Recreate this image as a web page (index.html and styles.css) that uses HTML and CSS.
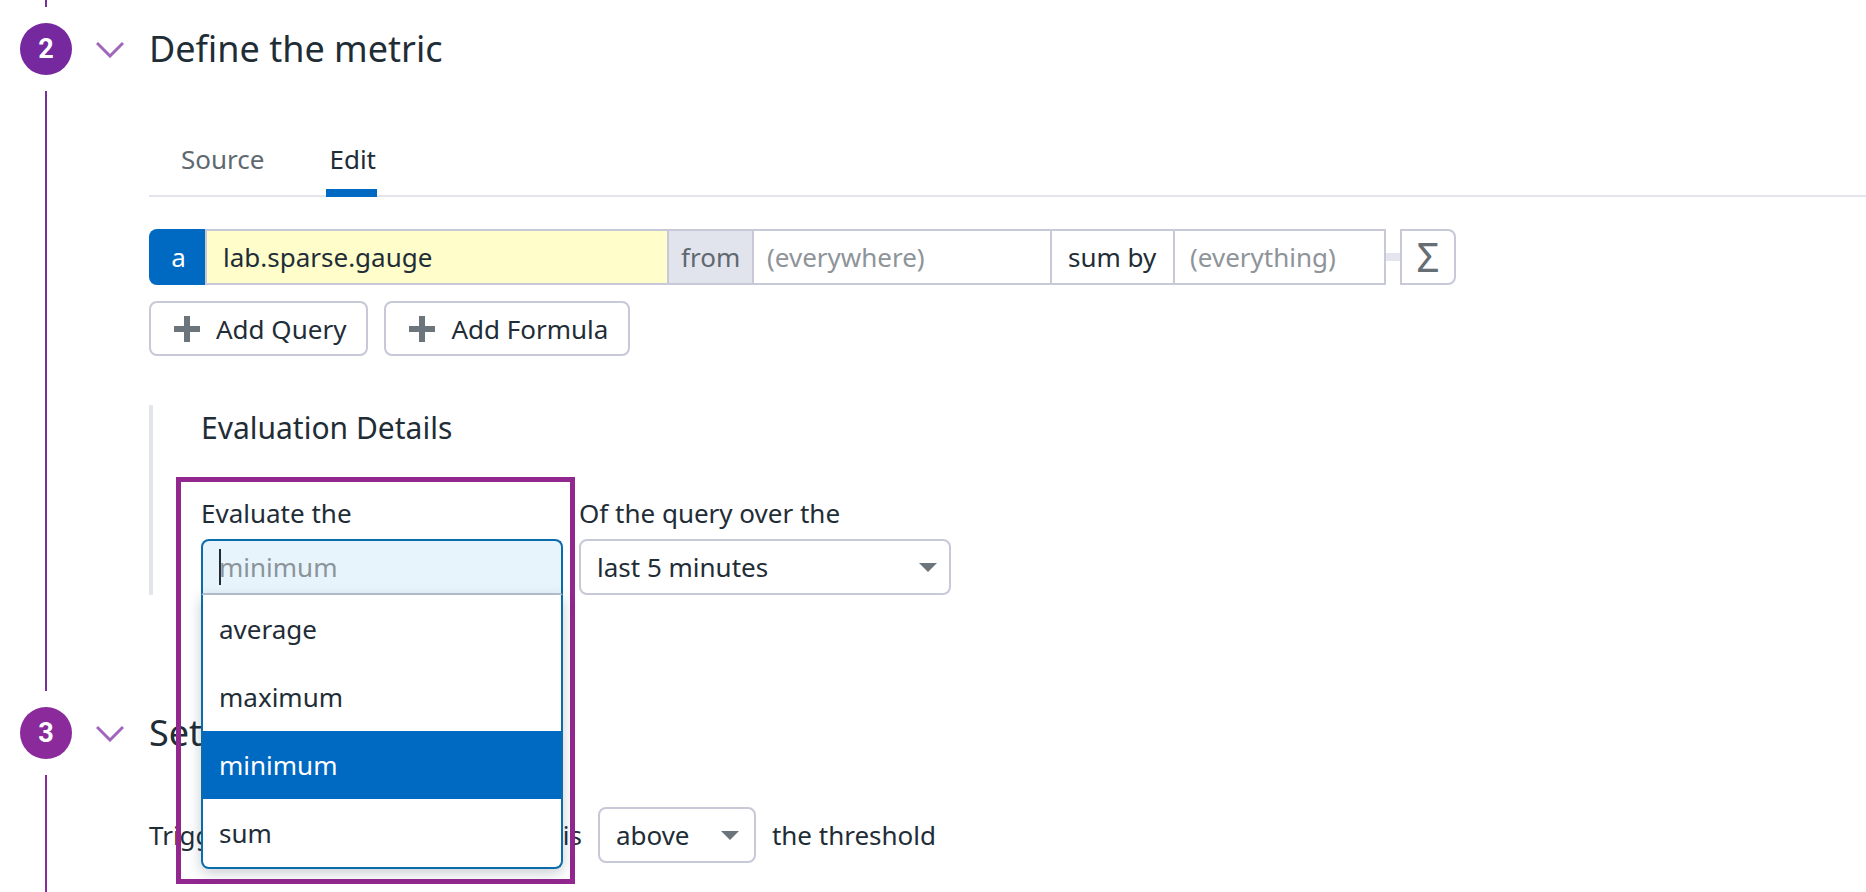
FILE: index.html
```html
<!DOCTYPE html>
<html lang="en">
<head>
<meta charset="utf-8">
<title>Define the metric</title>
<link rel="stylesheet" href="styles.css">
</head>
<body>
<main class="steps">
  <section class="step step-metric">
    <div class="rail">
      <span class="rail-stub"></span>
      <span class="badge badge-two">2</span>
      <span class="rail-line"></span>
    </div>
    <div class="step-main">
      <header class="step-head">
        <svg class="chevron" viewBox="0 0 28 17"><path d="M1 2 L14 15 L27 2" fill="none" stroke="currentColor" stroke-width="3"/></svg>
        <h2 class="step-title">Define the metric</h2>
      </header>
      <div class="step-body">
        <nav class="tabs">
          <span class="tab">Source</span>
          <span class="tab tab-active">Edit</span>
        </nav>
        <div class="query-row">
          <span class="q-letter">a</span>
          <span class="q-cell q-metric">lab.sparse.gauge</span>
          <span class="q-cell q-from">from</span>
          <span class="q-cell q-where">(everywhere)</span>
          <span class="q-cell q-sum">sum by</span>
          <span class="q-cell q-group">(everything)</span>
          <span class="q-link"></span>
          <span class="q-sigma">Σ</span>
        </div>
        <div class="actions">
          <button class="add-btn"><svg class="plus" viewBox="0 0 28 28"><path d="M14 1V27M1 14H27" fill="none" stroke="currentColor" stroke-width="6"/></svg>Add Query</button>
          <button class="add-btn"><svg class="plus" viewBox="0 0 28 28"><path d="M14 1V27M1 14H27" fill="none" stroke="currentColor" stroke-width="6"/></svg>Add Formula</button>
        </div>
        <div class="evaluation">
          <h3 class="eval-title">Evaluation Details</h3>
          <div class="eval-fields">
            <div class="field field-agg">
              <label class="field-label">Evaluate the</label>
              <div class="combo">
                <div class="combo-input"><span class="cursor"></span><span class="combo-ph">minimum</span></div>
                <ul class="combo-list">
                  <li class="combo-opt">average</li>
                  <li class="combo-opt">maximum</li>
                  <li class="combo-opt combo-opt-active">minimum</li>
                  <li class="combo-opt">sum</li>
                </ul>
              </div>
            </div>
            <div class="field field-window">
              <label class="field-label">Of the query over the</label>
              <div class="select select-window">last 5 minutes<svg class="caret" viewBox="0 0 18 9"><path d="M0 0H18L9 9Z" fill="currentColor"/></svg></div>
            </div>
          </div>
          <div class="callout"></div>
        </div>
      </div>
    </div>
  </section>
  <section class="step step-alert">
    <div class="rail">
      <span class="badge badge-three">3</span>
      <span class="rail-line"></span>
    </div>
    <div class="step-main">
      <header class="step-head">
        <svg class="chevron" viewBox="0 0 28 17"><path d="M1 2 L14 15 L27 2" fill="none" stroke="currentColor" stroke-width="3"/></svg>
        <h2 class="step-title">Set alert conditions</h2>
      </header>
      <div class="step-body">
        <div class="trigger-row">
          <span class="trigger-text">Trigger when the evaluated value is</span>
          <div class="select select-dir">above<svg class="caret" viewBox="0 0 18 9"><path d="M0 0H18L9 9Z" fill="currentColor"/></svg></div>
          <span>the threshold</span>
        </div>
      </div>
    </div>
  </section>
</main>
</body>
</html>
```
FILE: styles.css
```css
* { box-sizing: border-box; }
html, body { margin: 0; height: 892px; overflow: hidden; background: #fff; }
body { font-family: "Noto Sans", "Open Sans", sans-serif; font-size: 26px; line-height: 32px; color: #1f2d37; }
.steps { display: flex; flex-direction: column; }
.step { display: grid; grid-template-columns: 72px 1fr; }
.step-metric { height: 691px; }
.step-alert { height: 201px; padding-top: 16px; }
.step-metric .step-main { padding-top: 23px; }

.rail { display: flex; flex-direction: column; align-items: center; padding-left: 20px; min-height: 0; }
.rail-stub { width: 2px; height: 7px; background: #74309b; margin-bottom: 16px; }
.rail-line { flex: 1; width: 2px; margin-top: 16px; background: #74309b; }
.step-alert .rail-line { background: #8a2a9b; }
.badge { flex: none; width: 52px; height: 52px; border-radius: 50%; display: flex; align-items: center; justify-content: center; color: #fff; font-family: Roboto, sans-serif; font-weight: 700; font-size: 27px; }
.badge-two { background: #76289f; }
.badge-three { background: #8a2a9b; }

.step-head { display: flex; align-items: center; height: 52px; }
.chevron { width: 28px; height: 17px; margin-left: 24px; color: #a065bd; flex: none; }
.step-title { margin: 0 0 0 25px; font-size: 36px; line-height: 44px; font-weight: 400; white-space: nowrap; }
.step-body { margin-left: 77px; }

.tabs { display: flex; gap: 58px; margin-top: 68px; padding-left: 28px; border-bottom: 2px solid #e3e5eb; height: 54px; }
.tab { padding: 0 4px; color: #60696f; border-bottom: 8px solid transparent; height: 54px; margin-bottom: -2px; }
.tab-active { width: 51px; padding: 0 0 0 3px; color: #1f2d37; border-bottom-color: #0069c1; }

.query-row { display: flex; height: 56px; margin-top: 32px; }
.q-letter { width: 56px; background: #0069c1; color: #fff; border-radius: 8px 0 0 8px; display: flex; align-items: center; justify-content: center; padding-left: 3px; }
.q-cell { display: flex; align-items: center; border: 2px solid #c7c8d8; border-left-width: 0; padding-left: 16px; }
.q-metric { width: 464px; background: #fffecb; border-left-width: 2px; }
.q-from { width: 85px; background: #e2e4ed; color: #5f686e; padding-left: 12px; }
.q-where { width: 298px; color: #8e9499; padding-left: 13px; }
.q-sum { width: 123px; padding-left: 16px; }
.q-group { width: 211px; color: #8e9499; padding-left: 15px; }
.q-link { width: 14px; height: 8px; align-self: center; background: #e4e5ee; }
.q-sigma { width: 56px; border: 2px solid #c7c8d8; border-radius: 0 8px 8px 0; display: flex; align-items: center; justify-content: center; font-size: 40px; font-weight: 400; color: #666e74; }

.actions { display: flex; gap: 16px; margin-top: 16px; }
.add-btn { display: flex; align-items: center; gap: 15px; height: 55px; padding: 0 20px 0 22px; background: #fff; border: 2px solid #c7c8d8; border-radius: 8px; font: inherit; color: inherit; }
.plus { width: 28px; height: 28px; color: #6c757b; flex: none; }

.evaluation { position: relative; margin-top: 49px; height: 190px; border-left: 4px solid #e4e5ec; padding-left: 48px; }
.eval-title { margin: 0; font-size: 30px; line-height: 46px; font-weight: 400; }
.eval-fields { display: flex; gap: 16px; margin-top: 46px; }
.field { display: flex; flex-direction: column; }
.field-label { line-height: 32px; height: 42px; }
.field-agg { width: 362px; }
.field-window { width: 372px; }

.combo { position: relative; z-index: 3; height: 56px; border-radius: 8px 8px 0 0; }
.combo-input { height: 56px; display: flex; align-items: center; padding-left: 16px; background: #e8f4fc; border: 2px solid #0a6cab; border-bottom: 2px solid #b8c3d0; border-radius: 8px 8px 0 0; }
.cursor { width: 2px; height: 36px; margin-right: -2px; background: #1f2d37; }
.combo-ph { color: #8b9499; }
.combo-list { position: absolute; left: 0; right: 0; top: 100%; margin: 0; padding: 0; list-style: none; background: #fff; border: 2px solid #0a6cab; border-top: 0; border-radius: 0 0 8px 8px; box-shadow: 0 4px 14px rgba(40, 50, 70, .25); }
.combo-opt { height: 68px; display: flex; align-items: center; padding-left: 16px; }
.combo-opt-active { background: #0069c1; color: #fff; }

.select { display: flex; align-items: center; justify-content: space-between; height: 56px; border: 2px solid #c7c8d8; border-radius: 8px; padding: 0 12px 0 16px; background: #fff; white-space: nowrap; }
.caret { width: 18px; height: 9px; color: #6c757b; flex: none; }
.select-dir { width: 158px; padding-right: 15px; }

.callout { position: absolute; z-index: 2; left: 23px; top: 72px; width: 399px; height: 407px; border: 5px solid #92278f; pointer-events: none; }

.trigger-row { display: flex; align-items: center; margin-top: 48px; height: 56px; white-space: nowrap; }
.trigger-row .select { margin-left: 16px; margin-right: 16px; }
```
